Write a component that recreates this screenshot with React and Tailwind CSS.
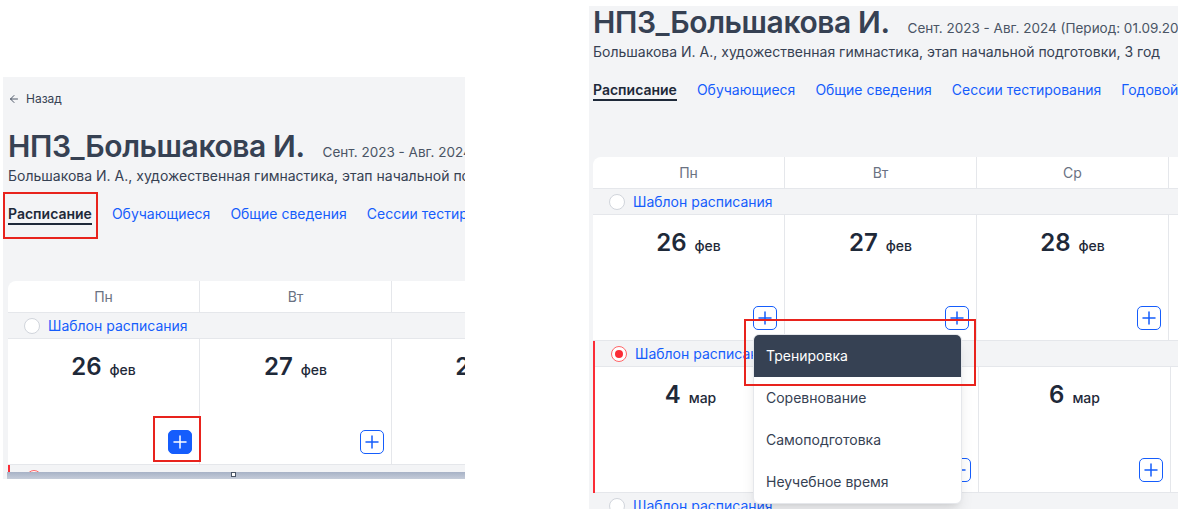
import { ArrowLeft } from 'lucide-react';

const TABS = ['Расписание', 'Обучающиеся', 'Общие сведения', 'Сессии тестирования', 'Годовой план', 'Журнал'];
const DAY_NAMES = ['Пн', 'Вт', 'Ср', 'Чт', 'Пт', 'Сб', 'Вс'];
const MENU_ITEMS = ['Тренировка', 'Соревнование', 'Самоподготовка', 'Неучебное время'];

const WEEKS = [
    {
        selected: false,
        dates: [['26', 'фев'], ['27', 'фев'], ['28', 'фев'], ['29', 'фев'], ['1', 'мар'], ['2', 'мар'], ['3', 'мар']],
    },
    {
        selected: true,
        dates: [['4', 'мар'], ['5', 'мар'], ['6', 'мар'], ['7', 'мар'], ['8', 'мар'], ['9', 'мар'], ['10', 'мар']],
    },
    {
        selected: false,
        dates: [['11', 'мар'], ['12', 'мар'], ['13', 'мар'], ['14', 'мар'], ['15', 'мар'], ['16', 'мар'], ['17', 'мар']],
    },
];

function PlusIcon() {
    return (
        <svg width="14" height="14" viewBox="0 0 14 14" fill="none" stroke="currentColor" strokeWidth="1.5" strokeLinecap="round">
            <path d="M7 1v12M1 7h12" />
        </svg>
    );
}

function AddButton({ filled, withMenu, marked }) {
    return (
        <div className="absolute bottom-2.5 right-[7px]">
            <button
                type="button"
                className={`flex h-6 w-6 items-center justify-center rounded-[5px] border-[1.5px] border-blue-600 ${
                    filled ? 'bg-blue-600 text-white' : 'bg-white text-blue-600'
                }`}
            >
                <PlusIcon />
            </button>

            {marked && (
                <span className="pointer-events-none absolute -left-[15px] -top-[14px] z-20 h-[46px] w-[48px] border-2 border-[#e8231d]" />
            )}

            {withMenu && (
                <>
                    <div className="absolute left-0 top-full z-10 mt-1 w-[209px] overflow-hidden rounded-md border border-gray-200 bg-white shadow-lg">
                        {MENU_ITEMS.map((item, i) => (
                            <div
                                key={item}
                                className={`flex h-[42px] items-center px-3 text-sm ${
                                    i === 0 ? 'bg-gray-700 text-white' : 'text-gray-700'
                                }`}
                            >
                                {item}
                            </div>
                        ))}
                    </div>
                    <span className="pointer-events-none absolute -left-[9px] top-[13px] z-20 h-[67px] w-[232px] border-2 border-[#e8231d]" />
                </>
            )}
        </div>
    );
}

function Radio({ checked }) {
    return checked ? (
        <span className="flex h-4 w-4 items-center justify-center rounded-full border border-red-400 bg-white">
            <span className="h-2 w-2 rounded-full bg-red-500" />
        </span>
    ) : (
        <span className="h-4 w-4 rounded-full border border-gray-300 bg-white" />
    );
}

function Week({ week, weekIndex, variant }) {
    return (
        <div className={week.selected ? 'border-l-2 border-red-500' : ''}>
            <div className="flex h-[26px] items-center gap-2 border-b border-gray-200 bg-gray-100 pl-4 text-sm text-blue-600">
                <Radio checked={week.selected} />
                <span>Шаблон расписания</span>
            </div>
            <div className="grid grid-cols-[repeat(7,192px)]">
                {week.dates.map(([day, month], i) => {
                    const first = weekIndex === 0 && i === 0;
                    return (
                        <div key={day} className="relative h-[126px] border-b border-r border-gray-200 pt-3">
                            <div className="flex items-baseline justify-center gap-2 text-gray-800">
                                <span className="text-2xl font-semibold leading-8">{day}</span>
                                <span className="text-sm font-medium">{month}</span>
                            </div>
                            <AddButton
                                filled={first && variant === 'left'}
                                marked={first && variant === 'left'}
                                withMenu={first && variant === 'right'}
                            />
                        </div>
                    );
                })}
            </div>
        </div>
    );
}

function SchedulePage({ variant }) {
    const isLeft = variant === 'left';

    return (
        <div className={`w-max whitespace-nowrap ${isLeft ? 'pl-[5px] pt-[14px]' : '-mt-[39px] pl-[4px]'}`}>
            <a className="flex items-center gap-1.5 text-xs leading-4 text-gray-700">
                <ArrowLeft size={12} strokeWidth={1.75} />
                Назад
            </a>

            <div className="mt-[19px] flex items-baseline gap-[18px]">
                <h1 className="text-[30px] font-semibold leading-10 tracking-[-0.4px] text-gray-700">НПЗ_Большакова И.</h1>
                <span className="text-[13.5px] text-gray-600">Сент. 2023 - Авг. 2024 (Период: 01.09.2023 - 31.08.2024)</span>
            </div>
            <p className="text-sm leading-5 text-gray-700">
                Большакова И. А., художественная гимнастика, этап начальной подготовки, 3 год
            </p>

            <nav className="mt-[19px] flex gap-5 text-sm">
                {TABS.map((tab, i) => (
                    <span key={tab} className="relative">
                        <span
                            className={`block border-b-2 leading-[18px] ${
                                i === 0 ? 'border-gray-800 font-semibold text-gray-800' : 'border-transparent text-blue-600'
                            }`}
                        >
                            {tab}
                        </span>
                        {i === 0 && isLeft && (
                            <span className="pointer-events-none absolute -left-[5px] -top-[13px] h-[47px] w-[95px] border-2 border-[#e8231d]" />
                        )}
                    </span>
                ))}
            </nav>

            <div className="mt-[56px] w-max rounded-tl-lg bg-white">
                <div className="grid grid-cols-[repeat(7,192px)]">
                    {DAY_NAMES.map((name) => (
                        <div
                            key={name}
                            className="flex h-8 items-center justify-center border-b border-r border-gray-200 text-sm text-gray-500"
                        >
                            {name}
                        </div>
                    ))}
                </div>
                {WEEKS.map((week, i) => (
                    <Week key={i} week={week} weekIndex={i} variant={variant} />
                ))}
            </div>
        </div>
    );
}

export default function App() {
    return (
        <div className="flex h-[509px] w-[1178px] items-start overflow-hidden bg-white font-['Inter','Noto_Sans',sans-serif]">
            <div className="ml-[3px] mt-[77px] flex h-[402px] w-[462px] flex-col">
                <div className="h-[395px] overflow-hidden bg-gray-100">
                    <SchedulePage variant="left" />
                </div>
                <div className="flex h-[7px] bg-gray-100">
                    <div className="relative ml-[4px] flex-1 bg-linear-to-b from-[#a7b2c6] to-[#c5ccd9]">
                        <span className="absolute left-[224px] top-0 h-[5px] w-[5px] border border-gray-600 bg-white" />
                    </div>
                </div>
            </div>

            <div className="ml-[124px] mt-[6px] h-[503px] w-[589px] overflow-hidden bg-gray-100">
                <SchedulePage variant="right" />
            </div>
        </div>
    );
}
